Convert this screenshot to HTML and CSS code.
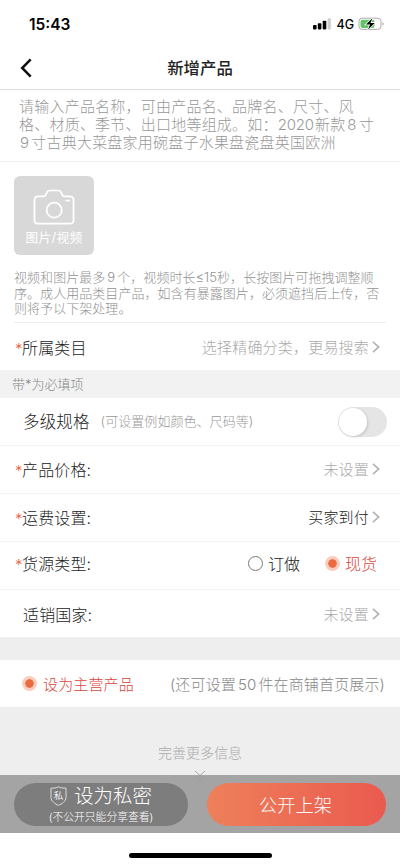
FILE: index.html
```html
<!DOCTYPE html>
<html lang="zh-CN">

<head>
    <meta charset="UTF-8">
    <meta name="viewport" content="width=device-width, initial-scale=1.0">
    <title>新增产品</title>
    <link rel="stylesheet" href="styles.css">
</head>

<body>
    <div class="page">
        <!-- Status bar -->
        <div class="status">
            <span class="time">15:43</span>
            <div class="status-icons">
                <svg width="18" height="12" viewBox="0 0 18 12">
                    <rect x="0" y="7" width="3.6" height="4.4" rx="0.8" />
                    <rect x="4.8" y="5.3" width="3.6" height="6.1" rx="0.8" />
                    <rect x="9.7" y="2.8" width="3.6" height="8.6" rx="0.8" />
                    <rect x="14.6" y="0.3" width="3.2" height="11.1" rx="0.8" fill="#ccc" />
                </svg>
                <span class="network">4G</span>
                <svg width="27" height="14" viewBox="0 0 27 14">
                    <rect x="1" y="1.2" width="22" height="11.2" rx="3.2" fill="#fff" stroke="#aaa" />
                    <rect x="2.5" y="2.7" width="14" height="8.2" rx="1.8" fill="#62c466" />
                    <path d="M24.5 5v3.8c1.6-.5 1.6-3.3 0-3.8z" fill="#aaa" />
                    <path d="M14.6 1 8 7.4h4.1l-2.2 5.4 6.8-6.9h-4.2z" stroke="#fff" stroke-width="1.6" paint-order="stroke" />
                </svg>
            </div>
        </div>

        <!-- Header -->
        <div class="header">
            <svg class="back" width="12" height="20" viewBox="0 0 12 20">
                <path d="M10.7 1.4 2.2 10l8.5 8.6" fill="none" stroke="#111" stroke-width="2.5" />
            </svg>
            <h1>新增产品</h1>
        </div>

        <!-- Name -->
        <div class="name">请输入产品名称，可由产品名、品牌名、尺寸、风<br>格、材质、季节、出口地等组成。如：<span class="year">2020</span>新款<span class="num">8</span>寸<br><span class="num first">9</span>寸古典大菜盘家用碗盘子水果盘瓷盘英国欧洲</div>

        <!-- Photos -->
        <div class="photos">
            <div class="upload">
                <svg width="42" height="36" viewBox="0 0 40 36" preserveAspectRatio="none">
                    <path d="M5 7.4h5.2c1.1 0 1.6-.6 2.1-1.8l.9-2.2c.5-1.2 1.2-1.9 2.7-1.9h8.2c1.5 0 2.2.7 2.7 1.900l.9 2.200c.5 1.200 1 1.800 2.100 1.800H35c2.200 0 3.600 1.400 3.600 3.600v20.200c0 2.200-1.400 3.500-3.600 3.500H5c-2.200 0-3.600-1.300-3.600-3.500V11c0-2.200 1.400-3.600 3.600-3.600z" />
                    <ellipse cx="20.2" cy="21.2" rx="7.200" ry="7.500" />
                    <path d="M31.500 11.600h3" />
                </svg>
                <span>图片/视频</span>
            </div>
            <p>视频和图片最多<span class="num">9</span>个，视频时长<span class="le">≤15</span>秒，长按图片可拖拽调整顺<br>序。成人用品类目产品，如含有暴露图片，必须遮挡后上传，否<br>则将予以下架处理。</p>
        </div>

        <div class="row category">
            <span class="label"><i>*</i>所属类目</span>
            <span class="value">选择精确分类，更易搜索</span>
            <svg class="arrow" width="8" height="12" viewBox="0 0 8 12"><path d="M1 .8 6.7 6 1 11.2" /></svg>
        </div>

        <div class="tip">带*为必填项</div>

        <!-- Options -->
        <div class="row">
            <span class="label indent spec">多级规格</span>
            <span class="note">(可设置例如颜色、尺码等)</span>
            <div class="switch"></div>
        </div>
        <div class="row">
            <span class="label"><i>*</i>产品价格:</span>
            <span class="value">未设置</span>
            <svg class="arrow" width="8" height="12" viewBox="0 0 8 12"><path d="M1 .8 6.7 6 1 11.2" /></svg>
        </div>
        <div class="row">
            <span class="label"><i>*</i>运费设置:</span>
            <span class="value dark">买家到付</span>
            <svg class="arrow" width="8" height="12" viewBox="0 0 8 12"><path d="M1 .8 6.7 6 1 11.2" /></svg>
        </div>
        <div class="row source">
            <span class="label"><i>*</i>货源类型:</span>
            <div class="choices">
                <span class="radio"></span>
                <span class="choice">订做</span>
                <span class="radio on"></span>
                <span class="choice red">现货</span>
            </div>
        </div>
        <div class="row last">
            <span class="label indent">适销国家:</span>
            <span class="value">未设置</span>
            <svg class="arrow" width="8" height="12" viewBox="0 0 8 12"><path d="M1 .8 6.7 6 1 11.2" /></svg>
        </div>

        <!-- Main product -->
        <div class="main-product">
            <span class="radio on"></span>
            <span class="main-label">设为主营产品</span>
            <span class="main-note">(还可设置<span class="num">50</span>件在商铺首页展示)</span>
        </div>

        <div class="more">
            <span>完善更多信息</span>
            <svg class="more-arrow" width="12" height="12" viewBox="0 0 12 12">
                <path d="M1 1l5 4.5L11 1M1 5.5 6 10l5-4.5" />
            </svg>
        </div>

        <!-- Bottom buttons -->
        <div class="actions">
            <div class="button private">
                <div class="private-title">
                    <svg width="17" height="20" viewBox="0 0 17 20">
                        <path d="M8.5.8C6.5 2 3.4 2.3 1 2v9.500c0 3.800 4 6.400 7.500 7.800 3.500-1.400 7.500-4 7.500-7.800V2C13.600 2.300 10.500 2 8.500.8z" fill="none" stroke="#ddd" />
                        <text class="shield-text" x="8.5" y="12.800">私</text>
                    </svg>
                    <span>设为私密</span>
                </div>
                <small>(不公开只能分享查看)</small>
            </div>
            <div class="button publish">公开上架</div>
        </div>
        <div class="home"><div class="home-bar"></div></div>
    </div>
</body>

</html>
```

FILE: styles.css
```css
* {
    box-sizing: border-box;
}

body {
    margin: 0;
    font-family: Inter, "Noto Sans CJK SC", sans-serif;
    font-weight: 300;
    color: #222;
}

.page {
    width: 400px;
    height: 866px;
    overflow: hidden;
    display: flex;
    flex-direction: column;
    white-space: nowrap;
    background: #eee;
}

.page > div {
    flex-shrink: 0;
}

.status {
    height: 46px;
    padding: 2px 16px 0 29px;
    display: flex;
    align-items: center;
    justify-content: space-between;
    background: #fff;
}

.time {
    font-size: 15.5px;
    font-weight: 600;
    color: #000;
}

.status-icons {
    display: flex;
    align-items: center;
    margin-right: -1px;
}

.network {
    font-size: 12.5px;
    font-weight: 500;
    color: #000;
    margin: 0 4px 0 5px;
}

.header {
    height: 44px;
    border-bottom: 1px solid #ddd;
    display: flex;
    align-items: center;
    padding-left: 20px;
    background: #fff;
}

h1 {
    flex: 1;
    margin: -2px 32px 0 0;
    text-align: center;
    font-size: 16.4px;
    font-weight: 500;
    color: #222;
}

.name {
    height: 72px;
    padding: 8px 0 0 19px;
    border-bottom: 1px solid #eee;
    font-size: 15px;
    letter-spacing: 0.22px;
    line-height: 18px;
    color: #999;
    background: #fff;
}

.num {
    margin: 0 2px;
}

.num.first {
    margin-left: 1px;
}

.year {
    letter-spacing: -0.2px;
    margin-right: 1px;
}

.photos {
    height: 161px;
    padding: 14px 14px 0;
    background: #fff;
}

.upload {
    width: 80px;
    height: 79px;
    border-radius: 6px;
    background: #d8d8d8;
    display: flex;
    flex-direction: column;
    align-items: center;
    padding-top: 13px;
    font-size: 12.8px;
    font-weight: 400;
    letter-spacing: 0.2px;
    color: #fff;
}

.upload span {
    line-height: 18px;
    margin-top: 4px;
}

.upload svg {
    flex-shrink: 0;
    fill: none;
    stroke: #fff;
    stroke-width: 1.7;
    stroke-linecap: round;
}

.photos p {
    height: 53px;
    margin: 15px 0 0;
    border-bottom: 1px solid #eee;
    font-size: 13px;
    letter-spacing: 0.05px;
    line-height: 15.5px;
    color: #929292;
}

.row {
    height: 48px;
    border-bottom: 1px solid #f2f2f2;
    padding: 0 20px 2px 15px;
    display: flex;
    align-items: center;
    background: #fff;
}

.category {
    height: 47px;
    border: none;
    padding-bottom: 0;
}

.label {
    font-size: 16px;
    letter-spacing: 0.15px;
}

.label i {
    display: inline-block;
    width: 7px;
    font-size: 15px;
    font-style: normal;
    line-height: 15px;
    color: #e8613c;
}

.indent {
    margin-left: 8px;
}

.spec {
    font-size: 16.5px;
}

.value {
    margin-left: auto;
    font-size: 15px;
    letter-spacing: 0.2px;
    color: #aaa;
}

.value.dark {
    color: #222;
}

.arrow {
    margin-left: 3px;
    fill: none;
    stroke: #b5b5b5;
    stroke-width: 1.7;
}

.tip {
    height: 28px;
    line-height: 28px;
    padding-left: 12px;
    background: #f2f2f2;
    font-size: 13px;
    color: #888;
}

.note {
    margin-left: 11px;
    font-size: 13px;
    letter-spacing: 0.05px;
    color: #999;
}

.switch {
    width: 49px;
    height: 30px;
    margin: 2px -7px 0 auto;
    padding: 1px;
    border-radius: 15px;
    background: #e5e5e5;
}

.switch::before {
    content: "";
    display: block;
    width: 28px;
    height: 28px;
    border-radius: 50%;
    background: #fff;
    box-shadow: 1px 1px 3px rgba(0, 0, 0, 0.15);
}

.source {
    padding-bottom: 5px;
}

.choices {
    display: flex;
    align-items: center;
    margin-left: auto;
    margin-right: 3px;
}

.radio {
    width: 15px;
    height: 15px;
    border: 1px solid #777;
    border-radius: 50%;
}

.radio.on {
    border: 3px solid #fbcdbd;
    background: #ec6a42;
    background-clip: padding-box;
}

.choice {
    font-size: 16px;
    margin-left: 5px;
}

.choice + .radio {
    margin-left: 25px;
}

.red {
    color: #d9443c;
}

.last {
    height: 47px;
    border: none;
    padding-bottom: 0;
}

.main-product {
    height: 47px;
    margin-top: 23px;
    padding: 0 15px 0 22px;
    display: flex;
    align-items: center;
    background: #fff;
    font-size: 15px;
    letter-spacing: 0.15px;
}

.main-label {
    margin-left: 6px;
    color: #d9443c;
}

.main-note {
    margin-left: auto;
    color: #888;
}

/* the arrow runs over the edge of the bottom bar */
.more {
    height: 68px;
    padding-top: 36px;
    display: flex;
    flex-direction: column;
    align-items: center;
    font-size: 14px;
    line-height: 20px;
    color: #aaa;
    position: relative;
    z-index: 1;
}

.more-arrow {
    margin-top: 7px;
    flex-shrink: 0;
    fill: none;
    stroke: #999;
    stroke-width: 0.8;
}

.actions {
    height: 58px;
    padding: 0 14px;
    display: flex;
    align-items: center;
    justify-content: space-between;
    background: #a4a4a4;
}

.button {
    height: 43px;
    border-radius: 22px;
    color: #fff;
    display: flex;
    align-items: center;
    justify-content: center;
}

.private {
    width: 174px;
    flex-direction: column;
    background: #7d7d7d;
}

.private-title {
    display: flex;
    align-items: center;
    gap: 7px;
    font-size: 19.4px;
    line-height: 24px;
}

.private small {
    font-size: 10.8px;
    line-height: 15px;
    margin-top: 2px;
}

.shield-text {
    font-size: 9.5px;
    font-weight: 400;
    text-anchor: middle;
    fill: #eee;
}

.publish {
    width: 179px;
    padding-right: 2px;
    font-size: 18.2px;
    background: linear-gradient(to right, #ee805a, #ea5a4f);
}

.home {
    flex: 1;
    background: #fff;
    padding-top: 20px;
}

.home-bar {
    width: 143px;
    height: 5px;
    margin: 0 auto;
    border-radius: 3px;
    background: #000;
}
```
